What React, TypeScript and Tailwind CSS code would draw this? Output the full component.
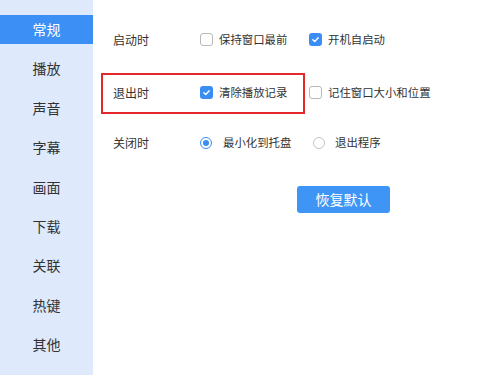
import React from "react";

const font = { fontFamily: '"Noto Sans CJK SC", "Noto Sans", sans-serif' };

function Check({ checked }: { checked: boolean }) {
  return checked ? (
    <span className="flex h-[13px] w-[13px] items-center justify-center rounded-[3px] bg-[#3a8ef3]">
      <svg width="9" height="9" viewBox="0 0 10 10">
        <path d="M2 5.2 L4.2 7.3 L8 3" fill="none" stroke="white" strokeWidth="1.5" strokeLinecap="round" strokeLinejoin="round" />
      </svg>
    </span>
  ) : (
    <span className="h-[13px] w-[13px] rounded-[3px] border border-[#b9b9b9] bg-white" />
  );
}

function Radio({ checked }: { checked: boolean }) {
  return checked ? (
    <span className="flex h-[12px] w-[12px] items-center justify-center rounded-full border border-[#3a8ef3] bg-white">
      <span className="h-[6px] w-[6px] rounded-full bg-[#3a8ef3]" />
    </span>
  ) : (
    <span className="h-[12px] w-[12px] rounded-full border border-[#c4c4c4] bg-white" />
  );
}

const nav = ["常规", "播放", "声音", "字幕", "画面", "下载", "关联", "热键", "其他"];

export default function App() {
  return (
    <div className="relative flex h-[375px] w-[480px] overflow-hidden bg-white text-[#333]" style={font}>
      <div className="flex w-[93px] flex-col gap-[10.4px] bg-[#deeafb] pt-[15px]">
        {nav.map((n, i) => (
          <div
            key={n}
            className={
              "flex h-[29px] items-center justify-center text-[14px] " +
              (i === 0 ? "bg-[#3c8ff5] text-white" : "text-[#333]")
            }
          >
            {n}
          </div>
        ))}
      </div>
      <div className="flex flex-1 flex-col pl-[20px] text-[12px]">
        <div className="mt-[27px] flex h-[26px] items-center">
          <span className="w-[87px]">启动时</span>
          <div className="flex w-[109px] items-center gap-[6px] text-[11.4px]">
            <Check checked={false} />
            <span>保持窗口最前</span>
          </div>
          <div className="flex items-center gap-[6px] text-[11.4px]">
            <Check checked={true} />
            <span>开机自启动</span>
          </div>
        </div>
        <div className="mt-[27px] flex h-[26px] items-center">
          <span className="w-[87px]">退出时</span>
          <div className="flex w-[109px] items-center gap-[6px] text-[11.4px]">
            <Check checked={true} />
            <span>清除播放记录</span>
          </div>
          <div className="flex items-center gap-[6px] text-[11.4px]">
            <Check checked={false} />
            <span>记住窗口大小和位置</span>
          </div>
        </div>
        <div className="mt-[24px] flex h-[26px] items-center">
          <span className="w-[87px]">关闭时</span>
          <div className="flex w-[113px] items-center gap-[11px] text-[11.4px]">
            <Radio checked={true} />
            <span>最小化到托盘</span>
          </div>
          <div className="flex items-center gap-[10px] text-[11.4px]">
            <Radio checked={false} />
            <span>退出程序</span>
          </div>
        </div>
        <div className="mt-[30px] pl-[184px]">
          <button className="flex h-[27px] w-[93px] items-center justify-center rounded-[3px] bg-[#3e95f6] text-[14px] text-white">
            恢复默认
          </button>
        </div>
      </div>
      <div className="pointer-events-none absolute left-[101px] top-[73px] h-[41px] w-[204px] border-2 border-[#e5262a]" />
    </div>
  );
}
